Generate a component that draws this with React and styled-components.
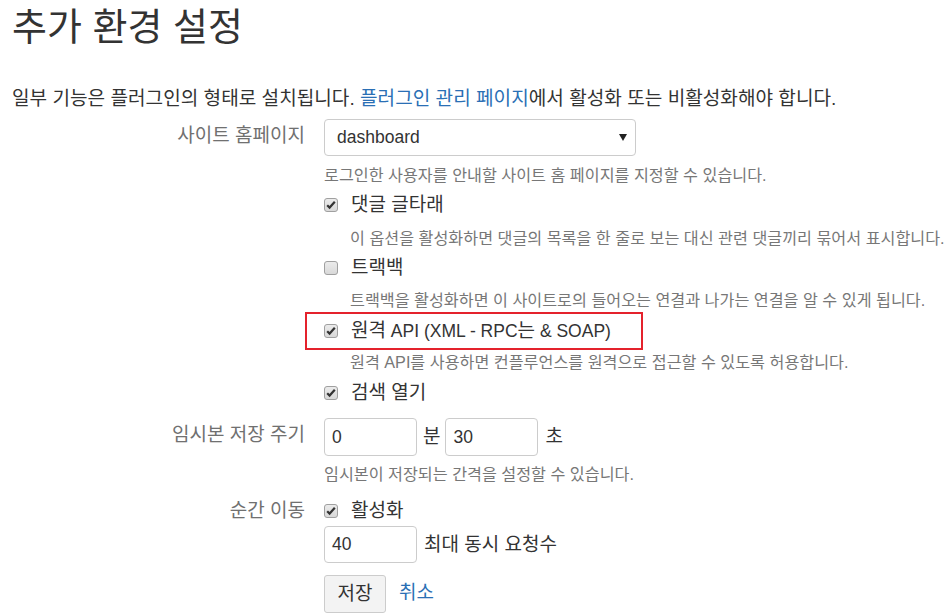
import React from "react";
import styled, { createGlobalStyle } from "styled-components";

const Global = createGlobalStyle`
  html, body { margin: 0; padding: 0; background: #fff; }
  body {
    font-family: "Liberation Sans", "Noto Sans CJK KR", sans-serif;
    color: #333;
    font-size: 19px;
  }
  * { box-sizing: border-box; }
`;

const Page = styled.div`
  padding: 0 12px;
  width: 949px;
`;

const Title = styled.h1`
  margin: 0;
  font-size: 38px;
  font-weight: 400;
  line-height: 54px;
  height: 54px;
  color: #333;
  white-space: nowrap;
`;

const Intro = styled.p`
  margin: 33px 0 0;
  font-size: 19.1px;
  line-height: 24px;
  white-space: nowrap;
`;

const Latin = styled.span`
  font-size: 17.5px;
`;

const Link = styled.a`
  color: #2a6fb5;
  text-decoration: none;
`;

const Field = styled.div`
  display: flex;
  align-items: flex-start;
  margin-top: ${(p) => p.$mt || 0}px;
`;

const Label = styled.div`
  width: 293px;
  flex: none;
  text-align: right;
  color: #707070;
  line-height: ${(p) => p.$lh || 24}px;
  white-space: nowrap;
`;

const Controls = styled.div`
  margin-left: 19px;
  display: flex;
  flex-direction: column;
  align-items: flex-start;
`;

const SelectBox = styled.div`
  width: 312px;
  height: 37px;
  border: 1px solid #ccc;
  border-radius: 4px;
  display: flex;
  align-items: center;
  justify-content: space-between;
  padding: 0 8px 0 12px;
  color: #333;
  background: #fff;
  font-size: 17.5px;
`;

const Help = styled.div`
  margin-top: ${(p) => p.$mt || 0}px;
  margin-left: ${(p) => (p.$indent ? 26 : 0)}px;
  font-size: 16.2px;
  line-height: 20px;
  color: #777;
  white-space: nowrap;
`;

const CheckRow = styled.label`
  display: flex;
  align-items: center;
  gap: 13px;
  margin-top: ${(p) => p.$mt || 0}px;
  line-height: 24px;
  white-space: nowrap;
  color: #333;
`;

const Highlight = styled.div`
  margin-top: ${(p) => p.$mt || 0}px;
  margin-left: -19px;
  border: 2px solid #e4222c;
  padding: 5px 30px 5px 17px;
`;

const Inline = styled.div`
  display: flex;
  align-items: center;
  margin-top: ${(p) => p.$mt || 0}px;
  white-space: nowrap;
`;

const Input = styled.div`
  width: 93px;
  height: ${(p) => p.$h || 38}px;
  border: 1px solid #ccc;
  border-radius: 4px;
  padding: 0 7px;
  display: flex;
  align-items: center;
  color: #333;
  background: #fff;
  font-size: 17.5px;
`;

const Unit = styled.span`
  margin: 0 ${(p) => p.$r || 0}px 5px ${(p) => p.$l || 0}px;
  color: #333;
`;

const Button = styled.button`
  font: inherit;
  height: 38px;
  width: 62px;
  border: 1px solid #ccc;
  border-radius: 3px;
  background: #f3f3f3;
  color: #333;
  padding: 0 0 6px;
`;

const CancelLink = styled(Link)`
  margin: 0 0 7px 13px;
`;

function Checkbox({ checked }) {
  return (
    <svg width="14" height="14" viewBox="0 0 14 14" style={{ flex: "none" }}>
      <defs>
        <linearGradient id="cbg" x1="0" y1="0" x2="0" y2="1">
          <stop offset="0" stopColor="#ececec" />
          <stop offset="1" stopColor="#d8d8d8" />
        </linearGradient>
      </defs>
      <rect x="0.5" y="0.5" width="13" height="13" rx="2.5" fill="url(#cbg)" stroke="#a0a0a0" />
      {checked && (
        <path d="M3.2 7.2 L5.6 9.6 L10.8 3.8" fill="none" stroke="#333" strokeWidth="2.2" />
      )}
    </svg>
  );
}

export default function App() {
  return (
    <>
      <Global />
      <Page>
        <Title>추가 환경 설정</Title>
        <Intro>
          일부 기능은 플러그인의 형태로 설치됩니다. <Link href="#">플러그인 관리 페이지</Link>에서 활성화 또는 비활성화해야 합니다.
        </Intro>

        <Field $mt={8}>
          <Label $lh={33}>사이트 홈페이지</Label>
          <Controls>
            <SelectBox>
              <span>dashboard</span>
              <svg width="8" height="7" viewBox="0 0 8 7">
                <path d="M0 0 L8 0 L4 7 Z" fill="#222" />
              </svg>
            </SelectBox>
            <Help $mt={9}>로그인한 사용자를 안내할 사이트 홈 페이지를 지정할 수 있습니다.</Help>
            <CheckRow $mt={8}>
              <Checkbox checked />
              댓글 글타래
            </CheckRow>
            <Help $mt={11} $indent>이 옵션을 활성화하면 댓글의 목록을 한 줄로 보는 대신 관련 댓글끼리 묶어서 표시합니다.</Help>
            <CheckRow $mt={8}>
              <Checkbox />
              트랙백
            </CheckRow>
            <Help $mt={10} $indent>트랙백을 활성화하면 이 사이트로의 들어오는 연결과 나가는 연결을 알 수 있게 됩니다.</Help>
            <Highlight $mt={2}>
              <CheckRow>
                <Checkbox checked />
                <span>
                  원격<Latin> API (XML - RPC</Latin>는<Latin> &amp; SOAP)</Latin>
                </span>
              </CheckRow>
            </Highlight>
            <Help $mt={2} $indent>원격 API를 사용하면 컨플루언스를 원격으로 접근할 수 있도록 허용합니다.</Help>
            <CheckRow $mt={9}>
              <Checkbox checked />
              검색 열기
            </CheckRow>
          </Controls>
        </Field>

        <Field $mt={13}>
          <Label $lh={34}>임시본 저장 주기</Label>
          <Controls>
            <Inline>
              <Input>0</Input>
              <Unit $l={6} $r={5}>분</Unit>
              <Input>30</Input>
              <Unit $l={7}>초</Unit>
            </Inline>
            <Help $mt={8}>임시본이 저장되는 간격을 설정할 수 있습니다.</Help>
          </Controls>
        </Field>

        <Field $mt={15}>
          <Label>순간 이동</Label>
          <Controls>
            <CheckRow>
              <Checkbox checked />
              활성화
            </CheckRow>
            <Inline $mt={3}>
              <Input $h={37}>40</Input>
              <Unit $l={7}>최대 동시 요청수</Unit>
            </Inline>
            <Inline $mt={12}>
              <Button type="button">저장</Button>
              <CancelLink href="#">취소</CancelLink>
            </Inline>
          </Controls>
        </Field>
      </Page>
    </>
  );
}
